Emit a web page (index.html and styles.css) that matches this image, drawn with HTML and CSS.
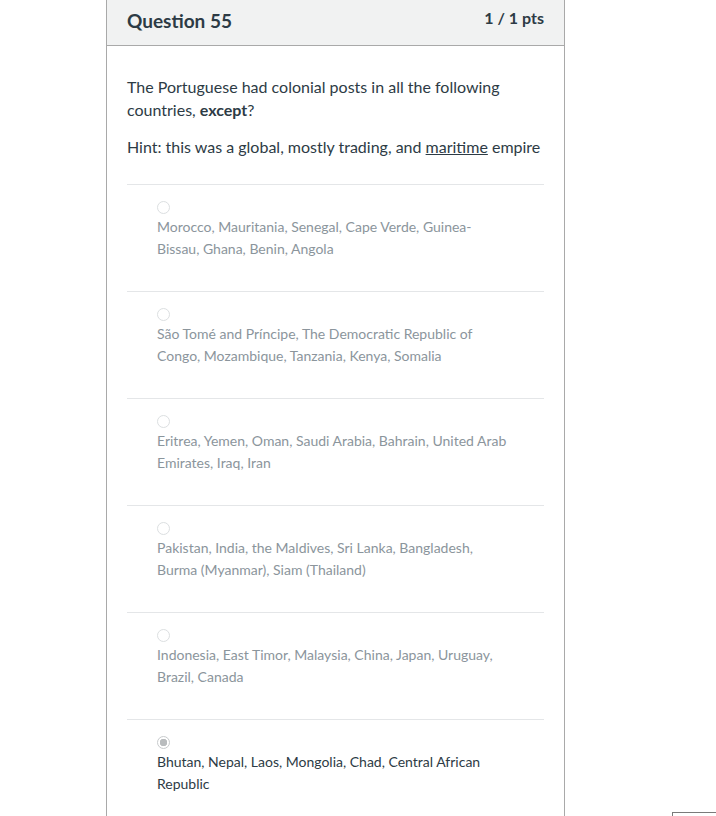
FILE: index.html
```html
<!DOCTYPE html>
<html>
<head>
<meta charset="utf-8">
<link rel="stylesheet" href="styles.css">
</head>
<body>
<div class="card">
  <div class="card-header">
    <h2 class="q-title">Question 55</h2>
    <span class="q-pts">1 / 1 pts</span>
  </div>
  <div class="card-body">
    <p class="q-text">The Portuguese had colonial posts in all the following countries, <strong>except</strong>?</p>
    <p class="q-hint">Hint: this was a global, mostly trading, and <u>maritime</u> empire</p>
    <div class="answers">
      <div class="answer">
        <span class="radio"></span>
        <div class="answer-text">Morocco, Mauritania, Senegal, Cape Verde, Guinea-Bissau, Ghana, Benin, Angola</div>
      </div>
      <div class="answer">
        <span class="radio"></span>
        <div class="answer-text">São Tomé and Príncipe, The Democratic Republic of Congo, Mozambique, Tanzania, Kenya, Somalia</div>
      </div>
      <div class="answer">
        <span class="radio"></span>
        <div class="answer-text">Eritrea, Yemen, Oman, Saudi Arabia, Bahrain, United Arab Emirates, Iraq, Iran</div>
      </div>
      <div class="answer">
        <span class="radio"></span>
        <div class="answer-text">Pakistan, India, the Maldives, Sri Lanka, Bangladesh, Burma (Myanmar), Siam (Thailand)</div>
      </div>
      <div class="answer">
        <span class="radio"></span>
        <div class="answer-text">Indonesia, East Timor, Malaysia, China, Japan, Uruguay, Brazil, Canada</div>
      </div>
      <div class="answer selected">
        <span class="radio checked"></span>
        <div class="answer-text">Bhutan, Nepal, Laos, Mongolia, Chad, Central African Republic</div>
      </div>
    </div>
  </div>
</div>
<div class="corner-box"></div>
</body>
</html>
```

FILE: styles.css
```css
html, body {
  margin: 0;
  padding: 0;
  background: #ffffff;
}
body {
  font-family: Lato, "Open Sans", "Liberation Sans", sans-serif;
  color: #2d3b45;
}
.card {
  margin-left: 106px;
  width: 457px;
  border-left: 1px solid #a9a9a9;
  border-right: 1px solid #a9a9a9;
  min-height: 830px;
}
.card-header {
  height: 45px;
  background: #f1f2f2;
  border-bottom: 1px solid #a9a9a9;
  display: flex;
  justify-content: space-between;
  align-items: flex-start;
  padding: 0 20px;
}
.q-title {
  margin: 0;
  padding-top: 9px;
  font-size: 19px;
  font-weight: 700;
  line-height: 24px;
  color: #2d3b45;
}
.q-pts {
  padding-top: 7px;
  font-size: 16px;
  font-weight: 700;
  line-height: 22px;
  color: #2d3b45;
}
.card-body {
  padding: 29px 20px 0 20px;
}
.q-text {
  margin: 0;
  font-size: 16px;
  line-height: 23px;
}
.q-text strong {
  font-weight: 700;
}
.q-hint {
  margin: 14px 0 0 0;
  font-size: 16px;
  line-height: 23px;
}
.answers {
  margin-top: 26px;
}
.answer {
  border-top: 1px solid #e4e6e8;
  padding: 16px 36px 30px 30px;
  height: 60px;
}
.radio {
  display: block;
  width: 11px;
  height: 11px;
  border: 1px solid #dcdfe1;
  border-radius: 50%;
  margin-bottom: 2px;
  background: #fff;
}
.radio.checked {
  border-color: #c8cbcd;
  background: radial-gradient(circle, #b9bcbe 0 3.5px, #fff 4px);
}
.answer-text {
  font-size: 14px;
  line-height: 22px;
  color: #8b959c;
}
.answer.selected .answer-text {
  color: #2d3b45;
}
.corner-box {
  position: fixed;
  left: 672px;
  top: 812px;
  width: 60px;
  height: 20px;
  border-left: 1px solid #7a7a7a;
  border-top: 1px solid #7a7a7a;
}
```
